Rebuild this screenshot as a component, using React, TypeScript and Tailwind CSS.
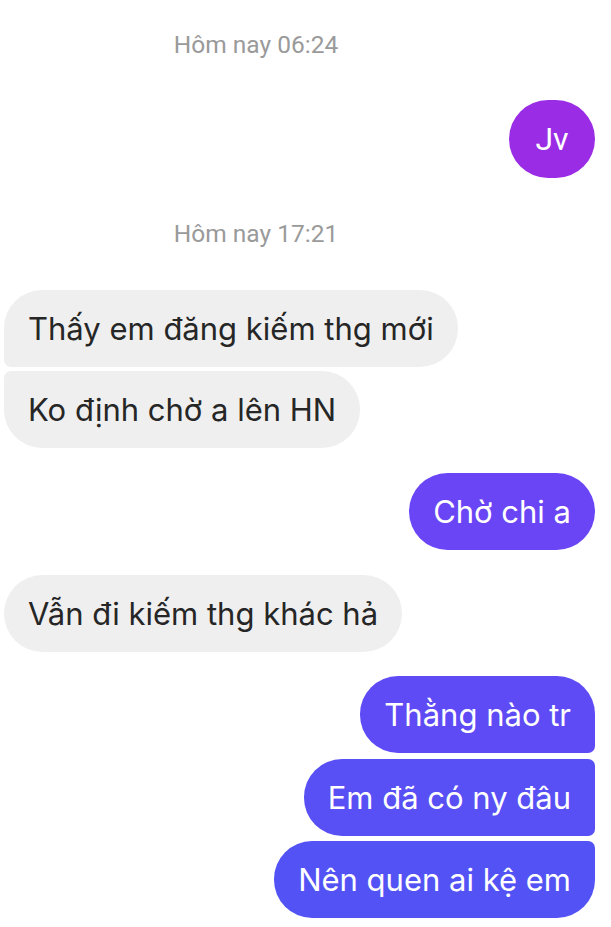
import React from "react";

type Msg = { text: string; className: string };

const stamp = "w-[504px] text-center text-[24.5px] leading-[25px] text-[#9a9a9a] [font-family:Roboto,'Liberation_Sans',sans-serif]";
const bubble = "flex h-[77px] items-center px-6 text-[31px] leading-none [font-family:Inter,'Noto_Sans',sans-serif]";

const theirs: Msg[] = [
  { text: "Thấy em đăng kiếm thg mới", className: "rounded-[38px] rounded-bl-[7px]" },
  { text: "Ko định chờ a lên HN", className: "rounded-[38px] rounded-tl-[7px]" },
];

const mine: Msg[] = [
  { text: "Thằng nào tr", className: "bg-[#5e4bf5] rounded-[38px] rounded-br-[7px]" },
  { text: "Em đã có ny đâu", className: "bg-[#584ff5] rounded-[38px] rounded-r-[7px]" },
  { text: "Nên quen ai kệ em", className: "bg-[#5352f5] rounded-[38px] rounded-tr-[7px]" },
];

export default function App() {
  return (
    <div className="flex h-[927px] w-[611px] flex-col bg-white pl-1 pr-4">
      <div className={`${stamp} mt-[32px]`}>Hôm nay 06:24</div>

      <div className="mt-[43px] flex justify-end">
        <div className="flex h-[78px] w-[86px] items-center justify-center rounded-full bg-[#9a2ce5] text-[32px] leading-none text-white [font-family:Roboto,'Liberation_Sans',sans-serif]">
          Jv
        </div>
      </div>

      <div className={`${stamp} mt-[43px]`}>Hôm nay 17:21</div>

      <div className="mt-[44px] flex flex-col items-start gap-[4px]">
        {theirs.map((m) => (
          <div key={m.text} className={`${bubble} bg-[#efefef] text-[#262626] ${m.className}`}>
            {m.text}
          </div>
        ))}
      </div>

      <div className="mt-[25px] flex justify-end">
        <div className={`${bubble} rounded-full bg-[#6a45f5] text-white`}>Chờ chi a</div>
      </div>

      <div className="mt-[25px] flex justify-start">
        <div className={`${bubble} rounded-full bg-[#efefef] text-[#262626]`}>Vẫn đi kiếm thg khác hả</div>
      </div>

      <div className="mt-[24px] flex flex-col items-end gap-[5.5px]">
        {mine.map((m) => (
          <div key={m.text} className={`${bubble} text-white ${m.className}`}>
            {m.text}
          </div>
        ))}
      </div>
    </div>
  );
}
